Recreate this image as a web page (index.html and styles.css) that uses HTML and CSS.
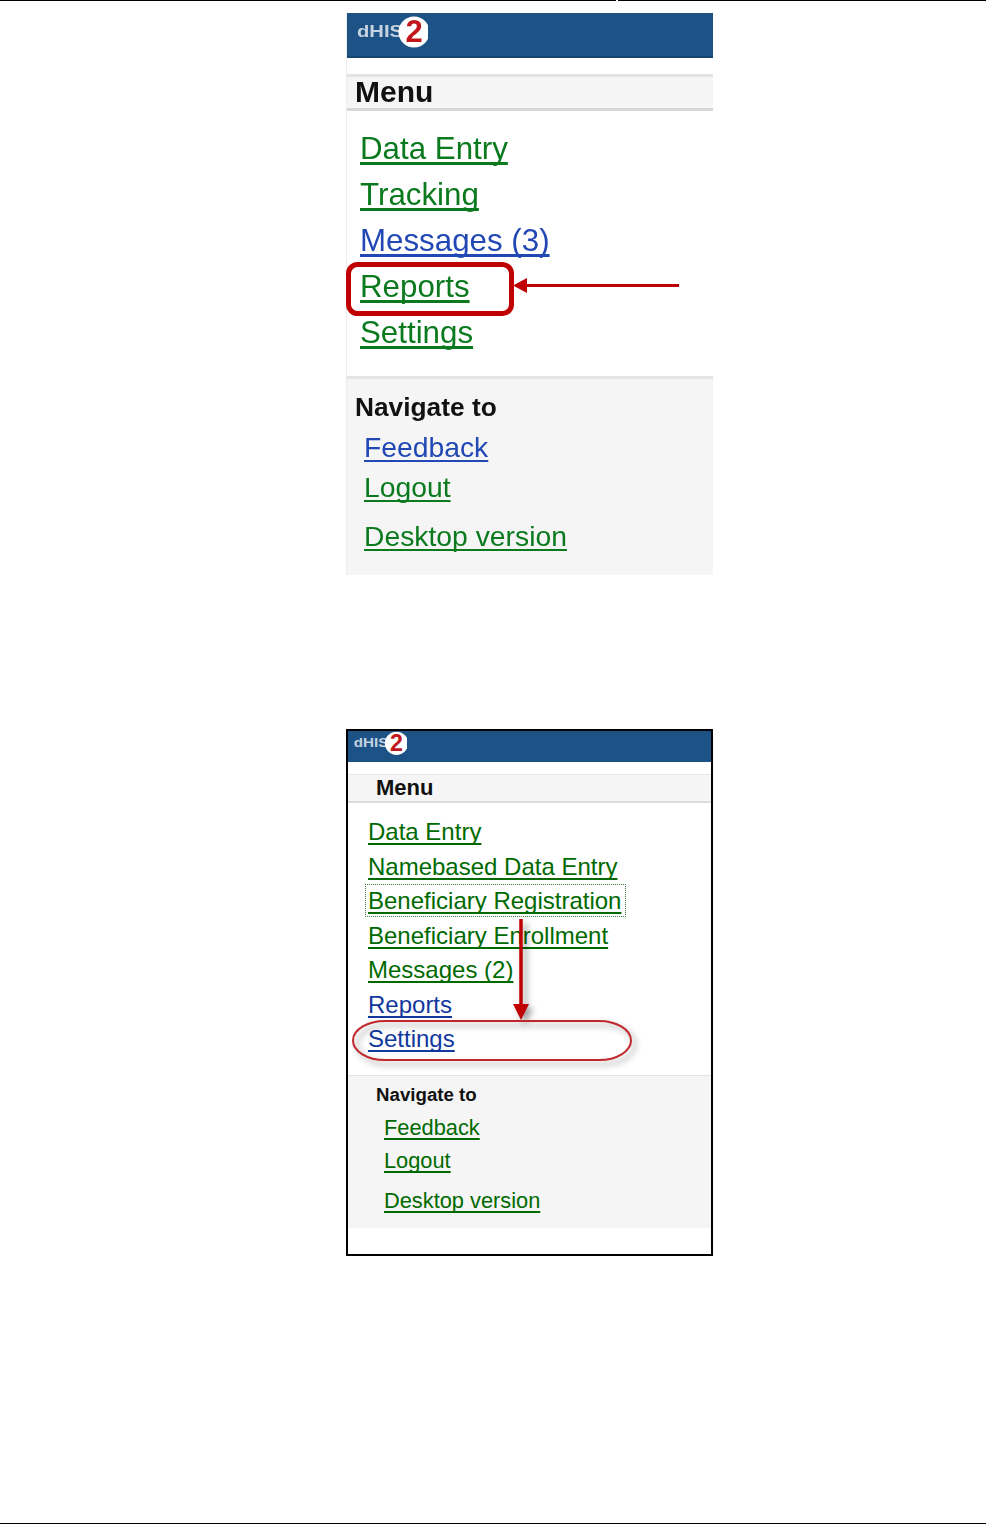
FILE: index.html
```html
<!DOCTYPE html>
<html lang="en">
<head>
  <meta charset="UTF-8">
  <title>DHIS2 mobile menu</title>
  <link rel="stylesheet" href="styles.css">
</head>
<body>

<div class="top-rule">
  <div class="rule-left"></div>
  <div class="rule-right"></div>
</div>

<div class="page">
  <div class="shot shot-large">
    <div class="shot-body">
      <div class="brand">
        <svg class="logo" viewBox="0 -3 72 38">
          <text class="logo-word" x="1" y="21" textLength="46" lengthAdjust="spacingAndGlyphs">dHIS</text>
          <circle cx="58" cy="16" r="15.5" fill="#ffffff"/>
          <text class="logo-two" x="58" y="26">2</text>
        </svg>
      </div>
      <div class="menu-title">Menu</div>
      <div class="menu-links">
        <div class="menu-row"><a class="link-green" href="#">Data Entry</a></div>
        <div class="menu-row"><a class="link-green" href="#">Tracking</a></div>
        <div class="menu-row"><a class="link-blue" href="#">Messages (3)</a></div>
        <div class="menu-row"><a class="link-green" href="#">Reports</a></div>
        <div class="menu-row"><a class="link-green" href="#">Settings</a></div>
      </div>
      <div class="nav-box">
        <div class="nav-title">Navigate to</div>
        <div class="nav-row"><a class="link-blue" href="#">Feedback</a></div>
        <div class="nav-row"><a class="link-green" href="#">Logout</a></div>
        <div class="nav-row nav-row-last"><a class="link-green" href="#">Desktop version</a></div>
      </div>
    </div>
    <svg class="marks" viewBox="346 13 367 562">
      <rect x="348.5" y="264.5" width="163" height="49" rx="9" fill="none" stroke="#c00000" stroke-width="5"/>
      <line x1="679" y1="285.5" x2="524" y2="285.5" stroke="#c00000" stroke-width="3"/>
      <polygon points="513,285.5 527,278 527,293" fill="#c00000"/>
    </svg>
  </div>

  <div class="shot shot-small">
    <div class="shot-body">
      <div class="brand">
        <svg class="logo" viewBox="0 -3 72 38">
          <text class="logo-word" x="1" y="21" textLength="46" lengthAdjust="spacingAndGlyphs">dHIS</text>
          <circle cx="58" cy="16" r="15.5" fill="#ffffff"/>
          <text class="logo-two" x="58" y="26">2</text>
        </svg>
      </div>
      <div class="menu-title">Menu</div>
      <div class="menu-links">
        <div class="menu-row"><a class="link-green" href="#">Data Entry</a></div>
        <div class="menu-row"><a class="link-green" href="#">Namebased Data Entry</a></div>
        <div class="menu-row"><a class="link-green focused" href="#">Beneficiary Registration</a></div>
        <div class="menu-row"><a class="link-green" href="#">Beneficiary Enrollment</a></div>
        <div class="menu-row"><a class="link-green" href="#">Messages (2)</a></div>
        <div class="menu-row"><a class="link-blue" href="#">Reports</a></div>
        <div class="menu-row"><a class="link-blue" href="#">Settings</a></div>
      </div>
      <div class="nav-box">
        <div class="nav-title">Navigate to</div>
        <div class="nav-row"><a class="link-green" href="#">Feedback</a></div>
        <div class="nav-row"><a class="link-green" href="#">Logout</a></div>
        <div class="nav-row nav-row-last"><a class="link-green" href="#">Desktop version</a></div>
      </div>
    </div>
    <svg class="marks" viewBox="348 731 363 523">
      <g class="shadowed">
        <rect x="353" y="1021" width="278" height="39" rx="32" ry="19.5" fill="none" stroke="#c0272d" stroke-width="2"/>
        <line x1="521" y1="919" x2="521" y2="1006" stroke="#c00000" stroke-width="3.5"/>
        <polygon points="513,1004 529,1004 521,1020" fill="#c00000"/>
      </g>
    </svg>
  </div>
</div>

<div class="bottom-rule"></div>

</body>
</html>
```

FILE: styles.css
```css
* {
  margin: 0;
  padding: 0;
  box-sizing: border-box;
}
html, body {
  height: 100%;
}
body {
  display: flex;
  flex-direction: column;
  font-family: 'Liberation Sans', Arial, sans-serif;
  background: #ffffff;
  color: #111111;
}
a {
  text-underline-offset: 3px;
  text-decoration-skip-ink: none;
}
.top-rule {
  display: flex;
  gap: 2px;
  height: 1px;
}
.rule-left {
  width: 616px;
  background: #000000;
}
.rule-right {
  flex: 1;
  background: #000000;
}
.page {
  flex: 1;
  padding: 12px 0 0 346px;
}
.bottom-rule {
  height: 1px;
  background: #000000;
}
.shot {
  position: relative;
  width: 367px;
}
.marks {
  position: absolute;
  top: 0;
  left: 0;
  width: 100%;
  height: 100%;
}
.shadowed {
  filter: drop-shadow(4px 4px 3px rgba(0, 0, 0, 0.4));
}
.brand {
  background: #1d5286;
  display: flex;
}
.logo-word {
  font-size: 17px;
  font-weight: bold;
  fill: #c5d3e0;
}
.logo-two {
  font-size: 31px;
  font-weight: bold;
  fill: #c0161c;
  text-anchor: middle;
}
.menu-title {
  background: #f5f5f5;
  font-weight: bold;
}
.menu-row {
  white-space: nowrap;
}
.nav-box {
  background: #f5f5f5;
}
.nav-title {
  font-weight: bold;
}
.link-green {
  color: #0b7a1e;
}
.link-blue {
  color: #2148b4;
}

/* first picture, scaled up */
.shot-large {
  height: 562px;
  border-left: 1px solid #ececec;
}
.shot-large .shot-body {
  filter: blur(0.4px);
}
.shot-large .marks {
  left: -1px;
  width: 367px;
}
.shot-large .brand {
  height: 45px;
  padding-left: 9px;
  border-bottom: 2px solid #174470;
}
.shot-large .logo {
  width: 72px;
  height: 38px;
}
.shot-large .menu-title {
  margin-top: 16px;
  height: 37px;
  padding-left: 8px;
  font-size: 30px;
  line-height: 30px;
  border-top: 3px solid #e2e2e2;
  border-bottom: 3px solid #d8d8d8;
}
.shot-large .menu-links {
  height: 265px;
  padding: 15px 0 0 13px;
}
.shot-large .menu-row {
  height: 46px;
  font-size: 31.3px;
  line-height: 45px;
}
.shot-large .nav-box {
  height: 199px;
  padding: 13px 0 0 8px;
  border-top: 3px solid #e4e4e4;
}
.shot-large .nav-title {
  font-size: 26.3px;
  line-height: 30px;
}
.shot-large .nav-row {
  margin: 9px 0 0 9px;
  height: 31px;
  font-size: 28.3px;
  line-height: 32px;
}
.shot-large .nav-row-last {
  margin-top: 18px;
}

/* second picture, framed */
.shot-small {
  margin-top: 154px;
  height: 527px;
  border: 2px solid #000000;
}
.shot-small .brand {
  height: 31px;
  padding-left: 5px;
}
.shot-small .logo {
  width: 54px;
  height: 28.5px;
  margin-top: -2px;
}
.shot-small .menu-title {
  margin-top: 12px;
  height: 29px;
  padding-left: 28px;
  font-size: 22px;
  line-height: 26px;
  border-top: 1px solid #e6e6e6;
  border-bottom: 2px solid #dcdcdc;
}
.shot-small .menu-links {
  height: 272px;
  padding: 12px 0 0 20px;
}
.shot-small .menu-row {
  height: 34.5px;
  font-size: 24px;
  line-height: 34px;
}
.shot-small .link-green {
  color: #006a00;
}
.shot-small .link-blue {
  color: #12389e;
}
.focused {
  padding-right: 2px;
  outline: 1px dotted #3d7a3d;
  outline-offset: 2px;
}
.shot-small .nav-box {
  height: 153px;
  padding: 8px 0 0 28px;
  border-top: 1px solid #e4e4e4;
}
.shot-small .nav-title {
  font-size: 18.7px;
  line-height: 22px;
}
.shot-small .nav-row {
  margin: 9px 0 0 8px;
  height: 24px;
  font-size: 21.8px;
  line-height: 25px;
}
.shot-small .nav-row-last {
  margin-top: 16px;
}
```
